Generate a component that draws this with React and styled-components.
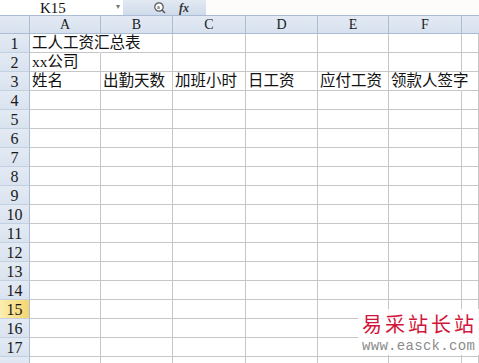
import React from "react";
import styled, { createGlobalStyle } from "styled-components";

const COLS = ["A", "B", "C", "D", "E", "F", ""];
const COL_WIDTHS = "30px 71px 72px 73px 72px 71px 73px 1fr";
const ROW_COUNT = 18;
const SELECTED_ROW = 15;

const cells = {
  "1-0": { text: "工人工资汇总表", spill: 1 },
  "2-0": { text: "xx公司" },
  "3-0": { text: "姓名" },
  "3-1": { text: "出勤天数" },
  "3-2": { text: "加班小时" },
  "3-3": { text: "日工资" },
  "3-4": { text: "应付工资" },
  "3-5": { text: "领款人签字", spill: 1 },
};

export default function App() {
  const rows = [];
  for (let r = 1; r <= ROW_COUNT; r++) rows.push(r);

  return (
    <Page>
      <GlobalStyle />
      <FormulaBar>
        <NameBox>
          <NameText>K15</NameText>
          <DropArrow>▾</DropArrow>
        </NameBox>
        <FxArea>
          <svg width="14" height="14" viewBox="0 0 14 14">
            <circle cx="6" cy="6" r="4.2" fill="#fff" stroke="#555" strokeWidth="1.2" />
            <path d="M9 9 L12 12" stroke="#555" strokeWidth="1.4" />
            <text x="4" y="8" fontSize="5" fill="#333" fontFamily="Liberation Sans">a</text>
          </svg>
          <FxText>fx</FxText>
        </FxArea>
        <FormulaInput />
      </FormulaBar>
      <Sheet>
        <Corner />
        {COLS.map((c, i) => (
          <ColHeader key={"h" + i} $last={i === COLS.length - 1}>
            {c}
          </ColHeader>
        ))}
        {rows.map((r) => (
          <React.Fragment key={r}>
            {/* the last row is only a sliver at the bottom edge */}
            <RowHeader $selected={r === SELECTED_ROW}>{r < ROW_COUNT ? r : ""}</RowHeader>
            {COLS.map((_, ci) => {
              const cell = cells[`${r}-${ci}`];
              return (
                <Cell key={ci} $spill={cell && cell.spill}>
                  {cell ? <CellText>{cell.text}</CellText> : null}
                </Cell>
              );
            })}
          </React.Fragment>
        ))}
      </Sheet>
      <Watermark>
        <WatermarkTitle>易采站长站</WatermarkTitle>
        <WatermarkUrl>www.easck.com</WatermarkUrl>
      </Watermark>
    </Page>
  );
}

const GlobalStyle = createGlobalStyle`
  html, body {
    margin: 0;
    padding: 0;
    background: #ffffff;
    overflow: hidden;
  }
`;

const Page = styled.div`
  position: relative;
  width: 479px;
  height: 363px;
  overflow: hidden;
  background: #fff;
`;

const FormulaBar = styled.div`
  display: flex;
  height: 15px;
  background: #fdfcfa;
`;

const NameBox = styled.div`
  position: relative;
  width: 123px;
  background: #fff;
  display: flex;
  align-items: center;
`;

const NameText = styled.span`
  margin-left: 40px;
  font-family: "Liberation Serif", serif;
  font-size: 15px;
  line-height: 14px;
  color: #111;
`;

const DropArrow = styled.span`
  position: absolute;
  right: 3px;
  top: 0;
  font-size: 8px;
  line-height: 14px;
  color: #777;
`;

const FxArea = styled.div`
  width: 83px;
  height: 15px;
  background: linear-gradient(#e2e9f3, #cfdbea);
  display: flex;
  align-items: center;
  gap: 12px;
  padding-left: 30px;
  box-sizing: border-box;
`;

const FxText = styled.span`
  font-family: "Liberation Serif", serif;
  font-style: italic;
  font-weight: bold;
  font-size: 12px;
  line-height: 12px;
  color: #333;
`;

const FormulaInput = styled.div`
  flex: 1;
  background: #fdfcfa;
`;

const Sheet = styled.div`
  display: grid;
  grid-template-columns: ${COL_WIDTHS};
  grid-auto-rows: 19px;
  background: #fff;
`;

const headerBase = `
  box-sizing: border-box;
  background: linear-gradient(#e3eaf4, #d7e1ee);
  color: #1a1a1a;
  font-family: "Liberation Serif", serif;
  display: flex;
  align-items: center;
  justify-content: center;
`;

const Corner = styled.div`
  ${headerBase}
  border-top: 1px solid #a9bcd3;
  border-right: 1px solid #a9bcd3;
  border-bottom: 1px solid #a9bcd3;
`;

const ColHeader = styled.div`
  ${headerBase}
  font-size: 14px;
  padding-top: 1px;
  border-top: 1px solid #a9bcd3;
  border-right: ${(p) => (p.$last ? "none" : "1px solid #a9bcd3")};
  border-bottom: 1px solid #a9bcd3;
`;

const RowHeader = styled.div`
  ${headerBase}
  font-size: 16px;
  padding-top: 1px;
  border-right: 1px solid #a9bcd3;
  border-bottom: 1px solid #c3d0e0;
  background: ${(p) =>
    p.$selected
      ? "linear-gradient(90deg, #fbeeb0, #f6d56e)"
      : "linear-gradient(#e3eaf4, #d9e3ef)"};
`;

const Cell = styled.div`
  box-sizing: border-box;
  border-right: 1px solid ${(p) => (p.$spill ? "transparent" : "#c6c6c6")};
  border-bottom: 1px solid #c6c6c6;
  position: relative;
  overflow: visible;
  white-space: nowrap;
  z-index: ${(p) => (p.$spill ? 1 : 0)};
`;

const CellText = styled.span`
  position: absolute;
  left: 2px;
  bottom: 0;
  font-family: "Liberation Serif", "Noto Sans CJK SC", serif;
  font-size: 15.5px;
  line-height: 18px;
  color: #111;
`;

const Watermark = styled.div`
  position: absolute;
  left: 358px;
  top: 309px;
  width: 121px;
  display: flex;
  flex-direction: column;
  align-items: flex-start;
  white-space: nowrap;
  background: rgba(255, 255, 255, 0.85);
  padding: 2px 0 0 4px;
  box-sizing: border-box;
`;

const WatermarkTitle = styled.div`
  font-family: "Noto Sans CJK SC", sans-serif;
  font-size: 20px;
  line-height: 26px;
  letter-spacing: 3px;
  color: #d2153a;
`;

const WatermarkUrl = styled.div`
  font-family: "Liberation Mono", monospace;
  font-size: 14px;
  line-height: 18px;
  letter-spacing: 0.3px;
  color: #8c8c8c;
`;
